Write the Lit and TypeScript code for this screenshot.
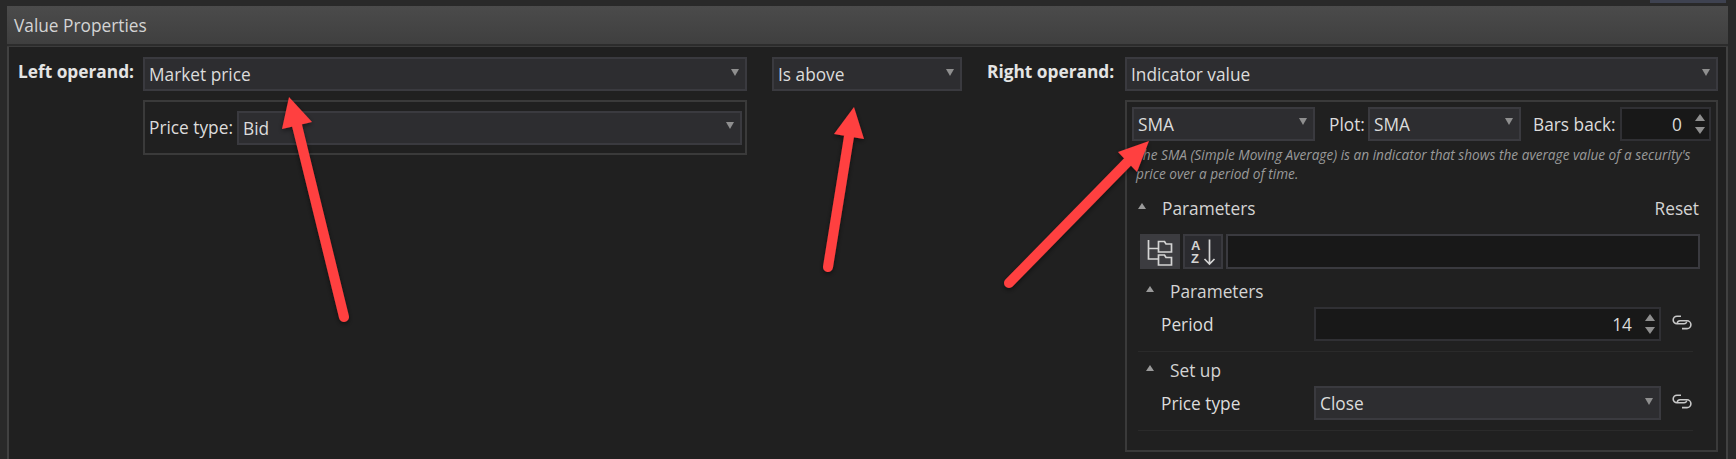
import { LitElement, html, css, svg } from "lit";
import { customElement } from "lit/decorators.js";

const caret = html`<span class="caret"></span>`;

function select(label: string, cls: string) {
  return html`<div class="select ${cls}"><span class="val">${label}</span>${caret}</div>`;
}

const spin = html`<span class="spin"><i class="up"></i><i class="down"></i></span>`;

const link = html`<svg class="link" width="20" height="15" viewBox="0 0 20 15" fill="none" stroke="#c8c8c8" stroke-width="1.6">
  <path d="M9 1.200H5a3.600 3.600 0 0 0 0 7.600h7a3 3 0 0 0 2.800-2.200" />
  <path d="M5.200 8.200A3 3 0 0 1 8 5.800h7a3.800 3.800 0 0 1 0 7.800h-5" />
</svg>`;

const treeIcon = html`<svg width="26" height="28" viewBox="0 0 26 28" fill="none" stroke="#d4d4d4" stroke-width="1.700">
  <path d="M1.500 2v19h10M1.500 10.500h10" />
  <path d="M11.500 3.500h6l1.500 2.500h5.500v8h-13z" />
  <path d="M11.500 17h6l1.500 2.500h5.500V27h-13z" />
</svg>`;

const sortIcon = html`<svg width="30" height="28" viewBox="0 0 30 28" fill="none">
  <text x="3" y="12" class="az">A</text>
  <text x="3" y="25" class="az">Z</text>
  <path d="M21.500 1.500V26M16.500 21l5 5 5-5" stroke="#d4d4d4" stroke-width="1.700" />
</svg>`;

function arrow(t: number[], a: number[], b: number[], tail: number[]) {
  const mx = (a[0] + b[0]) / 2;
  const my = (a[1] + b[1]) / 2;
  return svg`
    <g filter="url(#sh)">
      <line x1=${tail[0]} y1=${tail[1]} x2=${mx} y2=${my} stroke="#ff4040" stroke-width="10" stroke-linecap="round" />
      <polygon points="${t[0]},${t[1]} ${a[0]},${a[1]} ${b[0]},${b[1]}" fill="#ff4040" />
    </g>`;
}

@customElement("app-root")
export class AppRoot extends LitElement {
  static styles = css`
    :host {
      display: block;
      width: 1736px;
      height: 459px;
      position: relative;
      overflow: hidden;
      background: #292929;
      font-family: "Open Sans", "Noto Sans", sans-serif;
      font-size: 17.300px;
      color: #dcdcdc;
    }
    .panel {
      position: absolute;
      inset: 6px 8px -4px 7px;
      display: flex;
      flex-direction: column;
      background: #202020;
      border-left: 2px solid #414141;
      border-right: 2px solid #414141;
    }
    .title {
      height: 38px;
      flex: none;
      margin: 0 -2px;
      display: flex;
      align-items: center;
      padding-left: 7px;
      background: linear-gradient(#4b4b4b, #3f3f3f);
      border-bottom: 2px solid #2c2c2c;
      box-shadow: 0 1px 0 #3c3c3c;
      color: #d4d4d4;
    }
    .top-tab {
      position: absolute;
      top: 0;
      left: 1650px;
      width: 76px;
      height: 3px;
      background: #3e4250;
    }
    .body {
      flex: 1;
      display: flex;
      align-items: flex-start;
      padding: 11px 0 0 9px;
    }
    .left { display: flex; width: 729px; }
    .lbl-bold {
      font-weight: 700;
      width: 125px;
      flex: none;
      line-height: 30px;
      color: #e4e4e4;
      white-space: nowrap;
    }
    .col { flex: 1; display: flex; flex-direction: column; gap: 9px; min-width: 0; }
    .select {
      height: 34px;
      box-sizing: border-box;
      background: #2d2d30;
      border: 2px solid #3a3a3f;
      display: flex;
      align-items: center;
      justify-content: space-between;
      padding: 1px 6px 0 4px;
    }
    .caret {
      width: 0;
      height: 0;
      flex: none;
      margin-top: -5px;
      border-left: 4.500px solid transparent;
      border-right: 4.500px solid transparent;
      border-top: 7px solid #8f8f8f;
    }
    .group {
      border: 2px solid #3a3a3a;
      box-sizing: border-box;
    }
    .price-group {
      height: 55px;
      display: flex;
      align-items: center;
      padding: 0 3px 0 4px;
    }
    .price-group .lab { width: 88px; flex: none; white-space: nowrap; }
    .price-group .select { flex: 1; }
    .mid { width: 190px; margin-left: 25px; }
    .right { display: flex; margin-left: 25px; width: 731px; }
    .right .lbl-bold { width: 138px; }
    .right .group {
      height: 352px;
      padding: 5px 4px 0 5px;
      display: flex;
      flex-direction: column;
    }
    .row1 { display: flex; align-items: center; }
    .row1 span { white-space: nowrap; }
    .row1 .select { padding-top: 0; }
    .sma1 { width: 183px; flex: none; }
    .plot { margin-left: 14px; width: 39px; flex: none; }
    .sma2 { width: 153px; flex: none; }
    .bars { margin-left: 12px; width: 87px; flex: none; }
    .num {
      height: 34px;
      box-sizing: border-box;
      background: #181818;
      border: 2px solid #303034;
      display: flex;
      align-items: center;
      justify-content: flex-end;
      position: relative;
    }
    .n0 { width: 91px; flex: none; padding-right: 27px; }
    .spin {
      position: absolute;
      right: 3px;
      top: 5px;
      bottom: 5px;
      width: 12px;
      display: flex;
      flex-direction: column;
      justify-content: space-between;
      align-items: center;
    }
    .spin i {
      width: 0;
      height: 0;
      border-left: 5px solid transparent;
      border-right: 5px solid transparent;
    }
    .spin .up { border-bottom: 7px solid #8f8f8f; }
    .spin .down { border-top: 7px solid #8f8f8f; }
    .desc {
      margin: 4px 0 0 0;
      padding-left: 4px;
      font-style: italic;
      font-size: 13.650px;
      line-height: 19px;
      color: #9a9a9a;
      white-space: nowrap;
    }
    .sec {
      display: flex;
      align-items: center;
      height: 24px;
      color: #d4d4d4;
    }
    .tri {
      width: 0;
      height: 0;
      flex: none;
      margin-top: -5px;
      border-left: 4.500px solid transparent;
      border-right: 4.500px solid transparent;
      border-bottom: 6px solid #9a9a9a;
      margin-right: 16px;
    }
    .sec1 { margin-top: 13px; padding-left: 6px; padding-right: 13px; }
    .sec1 .reset { margin-left: auto; }
    .tools { display: flex; gap: 3px; margin: 14px 12px 0 8px; height: 35px; }
    .tbtn {
      width: 40px;
      box-sizing: border-box;
      background: #2b2b2f;
      border: 2px solid #3a3a3f;
      display: flex;
      align-items: center;
      justify-content: center;
    }
    .tbtn.on { background: #3c3c40; border-color: #3c3c40; }
    .search {
      flex: 1;
      background: #181818;
      border: 2px solid #3a3a3f;
    }
    .sec2 { padding-left: 14px; margin-top: 10px; }
    .sep + .sec2 { margin-top: 6px; }
    .prop {
      display: flex;
      align-items: center;
      height: 34px;
      padding-left: 29px;
      margin-top: 4px;
    }
    .prop .name { width: 153px; flex: none; }
    .prop .ctl { width: 347px; flex: none; }
    .prop .link { margin-left: 11px; margin-top: -4px; }
    .n14 { padding-right: 27px; }
    .sep { height: 1px; background: #2a2a2a; margin: 10px 19px 0 6px; }
    .arrows { position: absolute; left: 0; top: 0; pointer-events: none; }
    .az { font: 700 13px "Liberation Sans", sans-serif; fill: #d4d4d4; }
  `;

  render() {
    return html`
      <div class="top-tab"></div>
      <div class="panel">
        <div class="title">Value Properties</div>
        <div class="body">
          <div class="left">
            <div class="lbl-bold">Left operand:</div>
            <div class="col">
              ${select("Market price", "")}
              <div class="group price-group">
                <span class="lab">Price type:</span>
                ${select("Bid", "")}
              </div>
            </div>
          </div>
          <div class="mid">${select("Is above", "")}</div>
          <div class="right">
            <div class="lbl-bold">Right operand:</div>
            <div class="col">
              ${select("Indicator value", "")}
              <div class="group">
                <div class="row1">
                  ${select("SMA", "sma1")}
                  <span class="plot">Plot:</span>
                  ${select("SMA", "sma2")}
                  <span class="bars">Bars back:</span>
                  <div class="num n0">0${spin}</div>
                </div>
                <div class="desc">The SMA (Simple Moving Average) is an indicator that shows the average value of a security's<br />price over a period of time.</div>
                <div class="sec sec1"><span class="tri"></span>Parameters<span class="reset">Reset</span></div>
                <div class="tools">
                  <div class="tbtn on">${treeIcon}</div>
                  <div class="tbtn">${sortIcon}</div>
                  <div class="search"></div>
                </div>
                <div class="sec sec2"><span class="tri"></span>Parameters</div>
                <div class="prop">
                  <span class="name">Period</span>
                  <div class="num ctl n14">14${spin}</div>
                  ${link}
                </div>
                <div class="sep"></div>
                <div class="sec sec2"><span class="tri"></span>Set up</div>
                <div class="prop">
                  <span class="name">Price type</span>
                  ${select("Close", "ctl")}
                  ${link}
                </div>
                <div class="sep"></div>
              </div>
            </div>
          </div>
        </div>
      </div>
      <svg class="arrows" width="1736" height="459">
        <defs>
          <filter id="sh" x="-30%" y="-30%" width="160%" height="160%">
            <feDropShadow dx="0" dy="2" stdDeviation="2.500" flood-color="#000" flood-opacity="0.500" />
          </filter>
        </defs>
        ${arrow([289, 97], [282, 129], [312, 122], [344, 317])}
        ${arrow([854, 107], [834, 134], [864, 139], [828, 267])}
        ${arrow([1149, 141], [1118, 152], [1137, 172], [1009, 283])}
      </svg>
    `;
  }
}
